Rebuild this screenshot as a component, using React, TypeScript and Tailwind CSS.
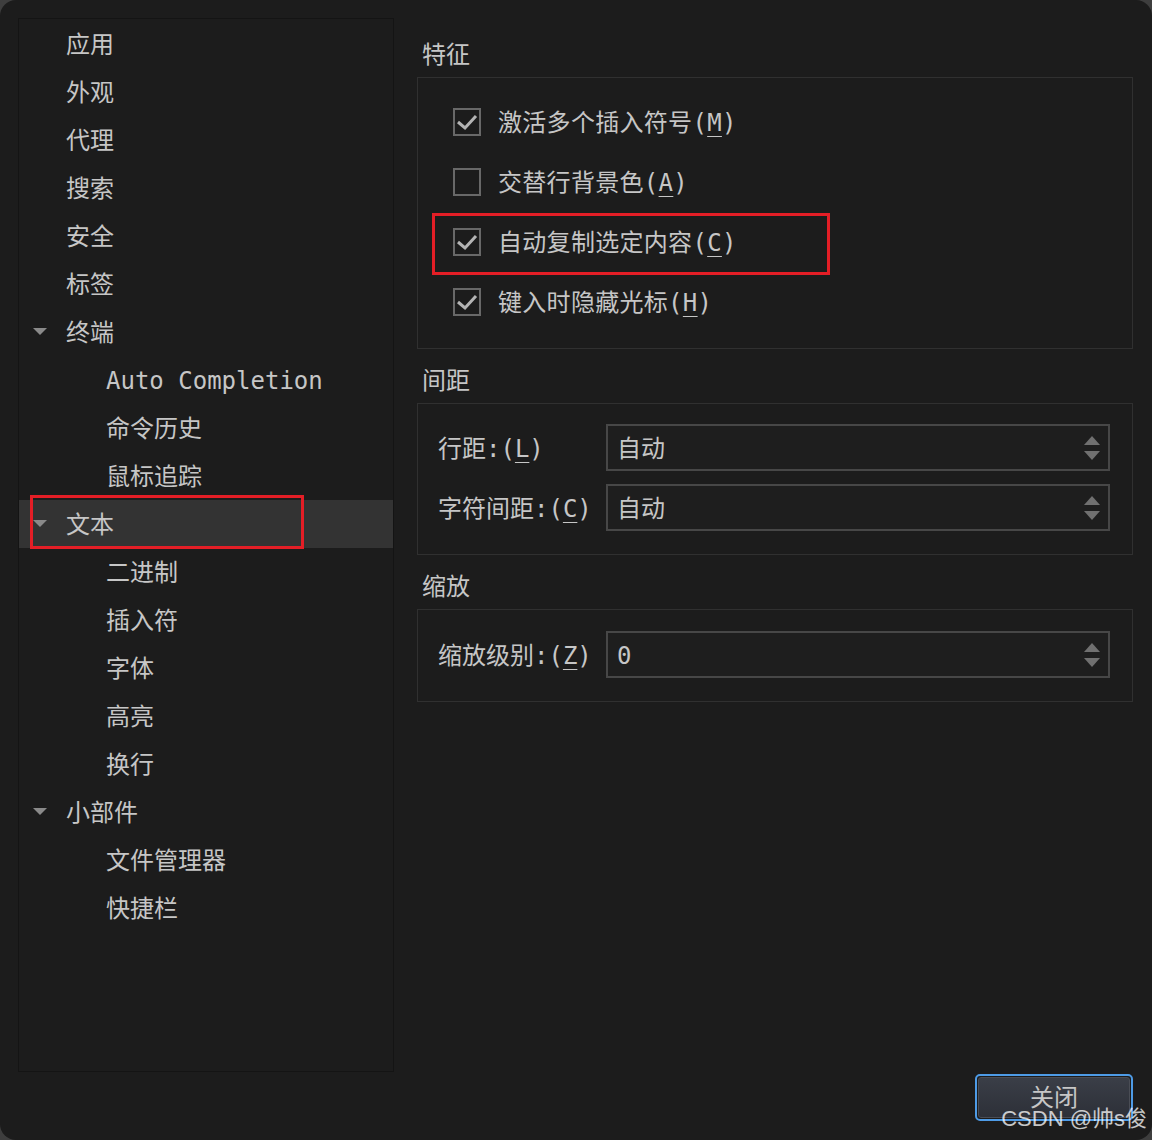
import React from "react";

type NavItem = { label: string; level: 0 | 1; arrow?: boolean; selected?: boolean };

const nav: NavItem[] = [
  { label: "应用", level: 0 },
  { label: "外观", level: 0 },
  { label: "代理", level: 0 },
  { label: "搜索", level: 0 },
  { label: "安全", level: 0 },
  { label: "标签", level: 0 },
  { label: "终端", level: 0, arrow: true },
  { label: "Auto Completion", level: 1 },
  { label: "命令历史", level: 1 },
  { label: "鼠标追踪", level: 1 },
  { label: "文本", level: 0, arrow: true, selected: true },
  { label: "二进制", level: 1 },
  { label: "插入符", level: 1 },
  { label: "字体", level: 1 },
  { label: "高亮", level: 1 },
  { label: "换行", level: 1 },
  { label: "小部件", level: 0, arrow: true },
  { label: "文件管理器", level: 1 },
  { label: "快捷栏", level: 1 },
];

const Key = ({ k }: { k: string }) => (
  <span className="underline decoration-1 underline-offset-[5px]">{k}</span>
);

const TreeArrow = () => (
  <svg width="14" height="8" viewBox="0 0 14 8" className="absolute left-[14px] top-[20px]">
    <polygon points="0,0 14,0 7,7" fill="#8a8a8a" />
  </svg>
);

const Checkbox = ({ checked }: { checked: boolean }) => (
  <div className="w-[28px] h-[28px] border-2 border-[#686868] flex items-center justify-center shrink-0">
    {checked && (
      <svg width="22" height="18" viewBox="0 0 22 18">
        <polyline points="2,9 9,15 20,3" fill="none" stroke="#b4b4b4" strokeWidth="3" />
      </svg>
    )}
  </div>
);

const CheckRow = ({
  checked,
  text,
  k,
  marked,
}: {
  checked: boolean;
  text: string;
  k: string;
  marked?: boolean;
}) => (
  <div className="relative h-[60px] flex items-center pl-[35px] gap-[17px]">
    <Checkbox checked={checked} />
    <span className="pt-[2px] tracking-[0.3px]">
      {text}(<Key k={k} />)
    </span>
    {marked && (
      <div className="absolute left-[14px] top-[1px] w-[398px] h-[62px] border-[3px] border-[#e41e26]" />
    )}
  </div>
);

const SpinBox = ({ value }: { value: string }) => (
  <div className="flex-1 h-[47px] border-2 border-[#474747] bg-[#1e1e1e] flex items-center justify-between pl-[9px] pr-[8px]">
    <span className="pt-[2px]">{value}</span>
    <div className="flex flex-col gap-[6px] items-center">
      <svg width="16" height="9" viewBox="0 0 16 9">
        <polygon points="8,0 16,9 0,9" fill="#707070" />
      </svg>
      <svg width="16" height="9" viewBox="0 0 16 9">
        <polygon points="0,0 16,0 8,9" fill="#707070" />
      </svg>
    </div>
  </div>
);

const SpinRow = ({ label, k, value }: { label: string; k: string; value: string }) => (
  <div className="flex items-center">
    <div className="w-[168px] shrink-0 pt-[2px]">
      {label}:(<Key k={k} />)
    </div>
    <SpinBox value={value} />
  </div>
);

const Heading = ({ text, first }: { text: string; first?: boolean }) => (
  <div className={`${first ? "mt-[21px]" : "mt-[16px]"} mb-[6px] pl-[5px] leading-[32px]`}>{text}</div>
);

export default function App() {
  return (
    <div className="w-[1152px] h-[1140px] bg-[#3e3e3e]">
      <div
        className="relative w-full h-full rounded-[16px] bg-[#1c1c1c] text-[#c6c6c6] text-[24px] pt-[18px] pl-[18px] flex flex-col"
        style={{ fontFamily: '"DejaVu Sans Mono", "Noto Sans CJK SC", monospace' }}
      >
        <div className="flex h-[1054px]">
          {/* sidebar tree */}
          <div className="w-[376px] h-full border border-[#141414] pt-[1px] shrink-0">
            {nav.map((item) => (
              <div
                key={item.label}
                className={`relative h-[48px] flex items-center ${item.level === 0 ? "pl-[47px]" : "pl-[87px]"} ${
                  item.selected ? "bg-[#333333]" : ""
                }`}
              >
                {item.arrow && <TreeArrow />}
                <span className="pt-[2px]">{item.label}</span>
                {item.selected && (
                  <div className="absolute left-[11px] top-[-5px] w-[274px] h-[54px] border-[3px] border-[#e41e26]" />
                )}
              </div>
            ))}
          </div>

          {/* settings pane */}
          <div className="ml-[23px] w-[716px] flex flex-col">
            <Heading text="特征" first />
            <div className="border border-[#303030] pt-[14px] pb-[16px]">
              <CheckRow checked text="激活多个插入符号" k="M" />
              <CheckRow checked={false} text="交替行背景色" k="A" />
              <CheckRow checked text="自动复制选定内容" k="C" marked />
              <CheckRow checked text="键入时隐藏光标" k="H" />
            </div>

            <Heading text="间距" />
            <div className="border border-[#303030] pt-[20px] pb-[23px] pl-[20px] pr-[22px] flex flex-col gap-[13px]">
              <SpinRow label="行距" k="L" value="自动" />
              <SpinRow label="字符间距" k="C" value="自动" />
            </div>

            <Heading text="缩放" />
            <div className="border border-[#303030] pt-[21px] pb-[23px] pl-[20px] pr-[22px]">
              <SpinRow label="缩放级别" k="Z" value="0" />
            </div>
          </div>
        </div>

        <div className="flex justify-end pr-[19px] mt-[2px]">
          <button className="w-[158px] h-[47px] rounded-[5px] border-2 border-[#4e9be6] p-[1px]">
            <div className="w-full h-full rounded-[3px] border border-[#4a4d55] bg-gradient-to-b from-[#3a3e47] to-[#2d3038] flex items-center justify-center text-[#c6c6c6]">
              关闭
            </div>
          </button>
        </div>

        <div
          className="absolute right-[5px] bottom-[9px] text-[22px] leading-[24px] text-white/75"
          style={{ fontFamily: '"Liberation Sans", "Noto Sans CJK SC", sans-serif' }}
        >
          CSDN @帅s俊
        </div>
      </div>
    </div>
  );
}
